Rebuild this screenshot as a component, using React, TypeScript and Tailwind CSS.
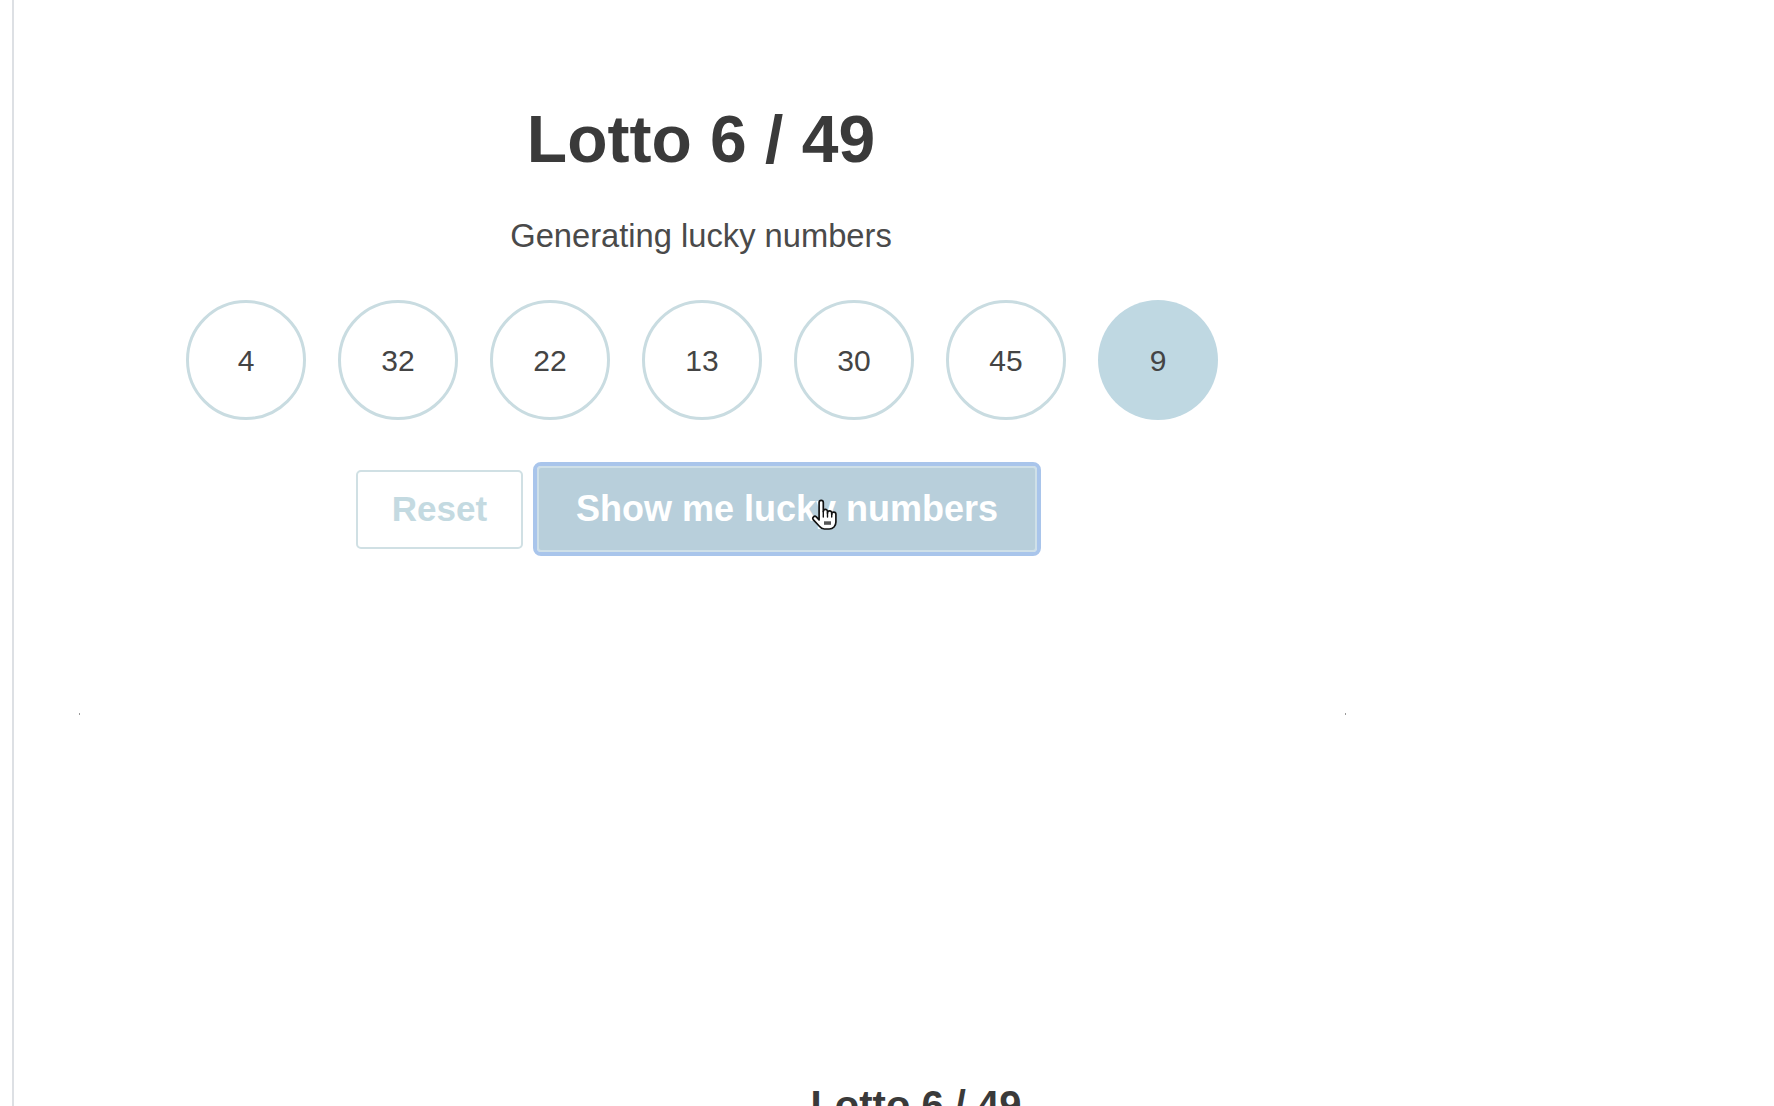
import React from 'react';

const numbers = [4, 32, 22, 13, 30, 45, 9];

const HandCursor: React.FC = () => (
  <svg width="28" height="34" viewBox="0 0 20 24" className="pointer-events-none absolute left-[273px] top-[32px]">
    <path
      d="M6.5 14V3a1.5 1.5 0 0 1 3 0v6.5a1.5 1.5 0 0 1 3 0v1a1.5 1.5 0 0 1 3 0v1a1.5 1.5 0 0 1 3 0V17c0 2.8-2 5-4.8 5h-3.4c-1.6 0-2.6-.7-3.6-2L2.3 15.3a1.5 1.5 0 0 1 2.2-2L6.5 15.5z"
      fill="#ffffff"
      stroke="#111111"
      strokeWidth="1.2"
      strokeLinejoin="round"
    />
    <path d="M9.5 9.5v4M12.5 10.5v3M15.5 11.5v2" stroke="#111111" strokeWidth="1" strokeLinecap="round" />
    <rect x="10" y="16.5" width="5" height="2.5" fill="#555555" />
  </svg>
);

const App: React.FC = () => {
  return (
    <div className="flex h-[1106px] w-full overflow-hidden bg-white font-['Liberation_Sans',Arial,sans-serif]">
      <div className="w-[12px] shrink-0" />
      <div className="w-[1374px] shrink-0 border-l-2 border-[#dde0e4]">
        <div className="flex flex-col items-center pt-[106px]">
          <h1 className="ml-[2px] text-[66px] leading-[66px] font-bold text-[#3a3a3a]">Lotto 6 / 49</h1>
          <p className="mt-[48px] ml-[2px] text-[32.7px] leading-[32px] text-[#4a4a4a]">Generating lucky numbers</p>

          {/* balls */}
          <div className="mt-[48px] ml-[4px] flex gap-[32px]">
            {numbers.map((n, i) => (
              <div
                key={i}
                className={`flex h-[120px] w-[120px] items-center justify-center rounded-full text-[30px] text-[#444444] ${
                  i === numbers.length - 1 ? 'bg-[#bfd8e2]' : 'border-[3px] border-[#c9dce1] bg-white'
                }`}
              >
                {n}
              </div>
            ))}
          </div>

          {/* actions */}
          <div className="mt-[46px] flex items-center gap-[14px] pr-[7px]">
            <button className="h-[79px] w-[167px] rounded-[5px] border-2 border-[#d0e0e4] bg-white text-[35px] font-bold text-[#c4dae1]">
              Reset
            </button>
            <div className="relative">
              <button className="h-[86px] w-[500px] rounded-[4px] border-2 border-[#cfe0e8] bg-[#b8cfdb] text-[36px] font-bold text-white outline-[4px] outline-solid outline-[#a9c5eb]">
                Show me lucky numbers
              </button>
              <HandCursor />
            </div>
          </div>

          <div className="mt-[161px] flex w-full justify-between pl-[65px] pr-[40px]">
            <span className="h-[2px] w-[1px] bg-[#9a9a9a]" />
            <span className="h-[2px] w-[1px] bg-[#9a9a9a]" />
          </div>
        </div>

        <div className="mt-[370px] pl-[432px] text-center">
          <h2 className="text-[40px] leading-[40px] font-bold text-[#3a3a3a]">Lotto 6 / 49</h2>
        </div>
      </div>
    </div>
  );
};

export default App;
